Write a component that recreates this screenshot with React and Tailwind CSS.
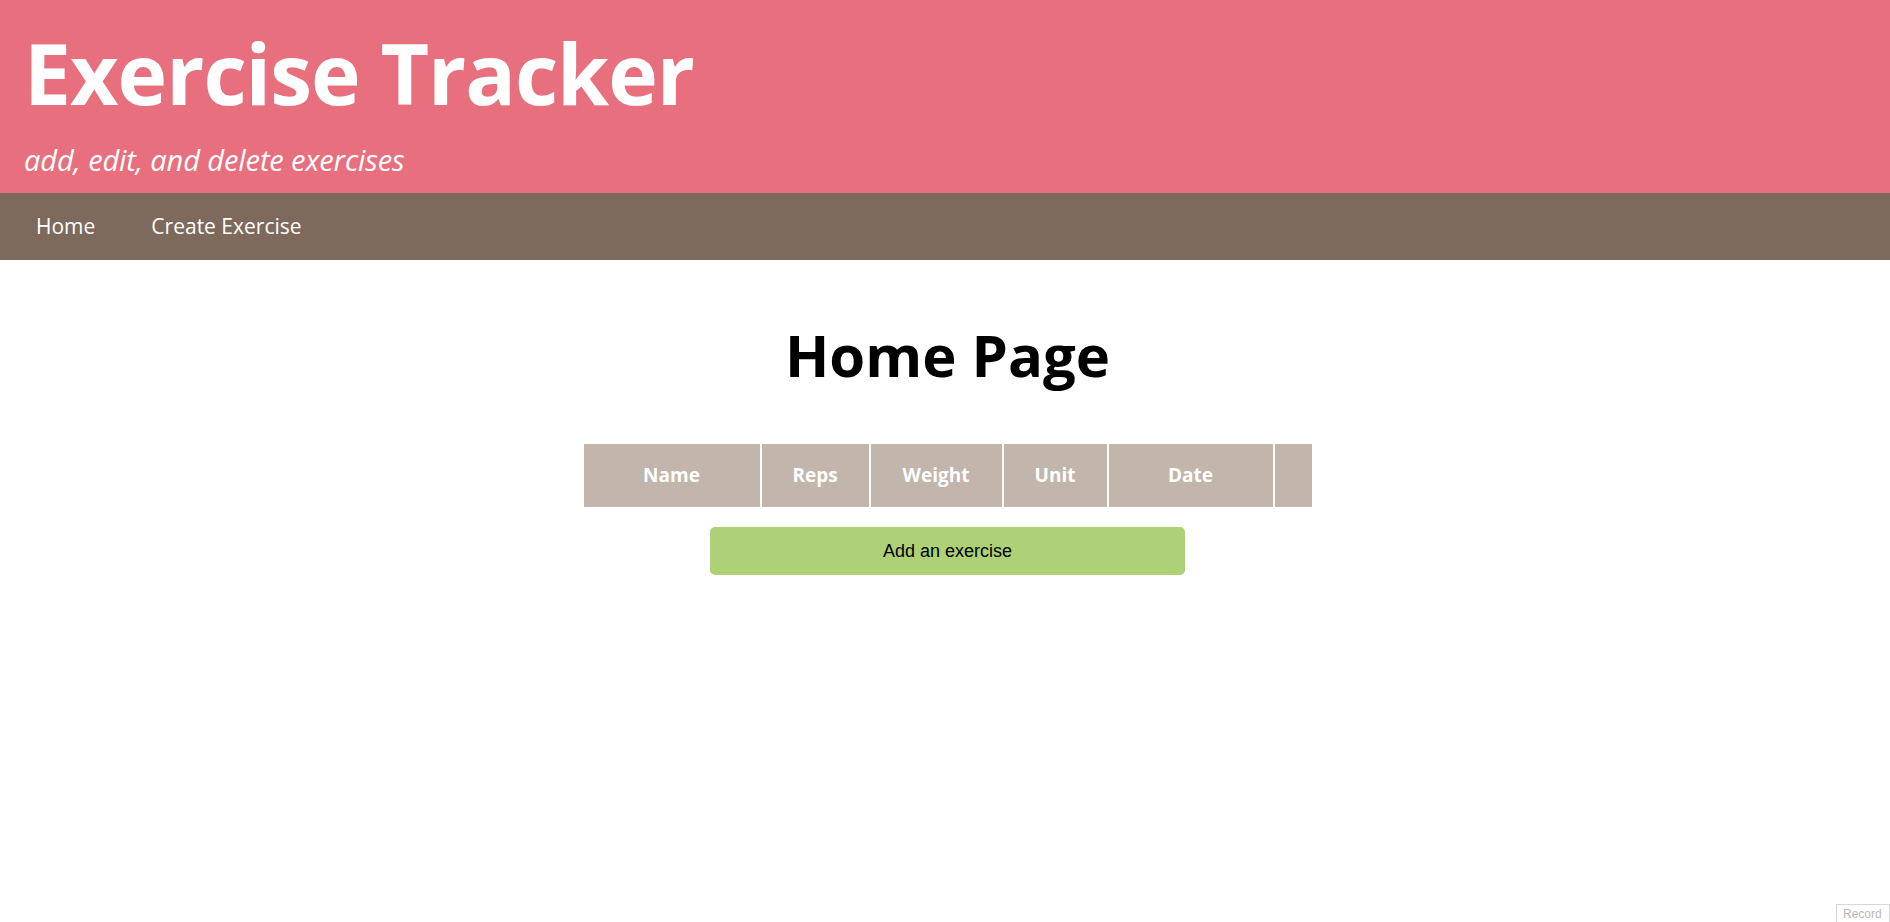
import React from "react";

const columns = [
    { label: "Name", width: "w-[176px]" },
    { label: "Reps", width: "w-[107px]" },
    { label: "Weight", width: "w-[131px]" },
    { label: "Unit", width: "w-[103px]" },
    { label: "Date", width: "w-[164px]" },
    { label: "", width: "w-[37px]" },
];

function Header() {
    return (
        <header className="bg-[#e8707e] text-white h-[193px] px-[24px] pt-[23px]">
            <h1 className="text-[84px] font-bold leading-[100px] tracking-[-1px]">Exercise Tracker</h1>
            <p className="italic text-[29px] leading-[40px] mt-[17px] tracking-[-0.1px]">add, edit, and delete exercises</p>
        </header>
    );
}

function Nav() {
    return (
        <nav className="bg-[#7e6a5c] h-[67px] flex items-center gap-[56px] px-[36px] text-[21px] text-white">
            <a href="#home">Home</a>
            <a href="#create">Create Exercise</a>
        </nav>
    );
}

export default function App() {
    return (
        <div className="min-h-screen bg-white font-['Open_Sans',sans-serif]">
            <Header />
            <Nav />
            <main className="flex flex-col items-center pl-[5px]">
                <h2 className="text-[58px] font-bold leading-[70px] mt-[60px] text-black">Home Page</h2>
                <table className="mt-[52px] border-separate border-spacing-[2px]">
                    <thead>
                        <tr>
                            {columns.map((c) => (
                                <th
                                    key={c.label || "actions"}
                                    className={`${c.width} h-[63px] bg-[#c2b6ac] text-white text-[19px] font-bold text-center p-0`}
                                >
                                    {c.label}
                                </th>
                            ))}
                        </tr>
                    </thead>
                </table>
                <button className="mt-[18px] w-[475px] h-[48px] rounded-[5px] bg-[#aed177] text-black text-[18px] font-['Liberation_Sans',Arial,sans-serif]">
                    Add an exercise
                </button>
            </main>
            {/* recaptcha badge peeking in the corner */}
            <div className="fixed right-0 top-[904px] w-[54px] h-[30px] border border-[#d8d8d8] bg-white pl-[6px] text-[12px] text-[#b8b8b8] font-['Liberation_Sans',Arial,sans-serif] overflow-hidden">
                Record
            </div>
        </div>
    );
}
